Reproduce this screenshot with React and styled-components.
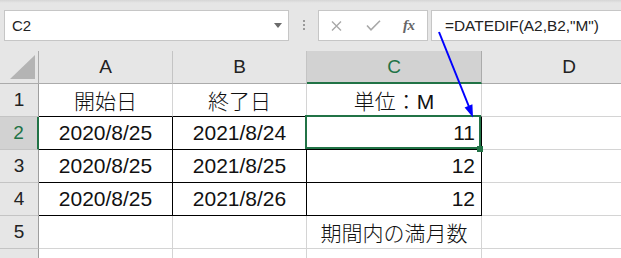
import React from 'react';
import styled, { createGlobalStyle } from 'styled-components';

const GREEN = '#217346';

const Global = createGlobalStyle`
  html, body { margin: 0; padding: 0; background: #fff; overflow: hidden; }
  body { font-family: "Liberation Sans", "Noto Sans CJK JP", sans-serif; }
`;

const Frame = styled.div`
  position: relative;
  width: 621px;
  height: 258px;
  overflow: hidden;
  background: #e6e6e6;
`;

const Toolbar = styled.div`
  display: flex;
  align-items: flex-start;
  height: 51px;
  box-sizing: border-box;
  padding: 10px 0 0 4px;
  background: linear-gradient(#d6d6d6 0, #e6e6e6 3px);
  white-space: nowrap;
`;

const NameBox = styled.div`
  flex: none;
  width: 285px;
  height: 31px;
  box-sizing: border-box;
  border: 1px solid #c6c6c6;
  background: #fff;
  display: flex;
  align-items: center;
  justify-content: space-between;
  padding: 0 6px 0 7px;
  font-size: 15px;
  color: #222;
`;

const Caret = styled.span`
  width: 0;
  height: 0;
  border-left: 4px solid transparent;
  border-right: 4px solid transparent;
  border-top: 5px solid #6b6b6b;
`;

const Dots = styled.div`
  flex: none;
  display: flex;
  flex-direction: column;
  gap: 2px;
  margin: 10px 0 0 14px;
`;

const Dot = styled.span`
  width: 2px;
  height: 2px;
  background: #9a9a9a;
`;

const ButtonBox = styled.div`
  flex: none;
  width: 110px;
  height: 31px;
  box-sizing: border-box;
  margin-left: 13px;
  border: 1px solid #c6c6c6;
  background: #fff;
  display: flex;
  align-items: center;
  padding-left: 12px;
`;

const IconSlot = styled.span`
  display: flex;
  margin-left: ${p => p.$gap || 0}px;
`;

const Fx = styled.span`
  margin-left: ${p => p.$gap || 0}px;
  font-family: "Liberation Serif", serif;
  font-style: italic;
  font-weight: bold;
  font-size: 15px;
  color: #666;
  letter-spacing: -0.5px;
`;

const FormulaBox = styled.div`
  flex: none;
  width: 300px;
  height: 31px;
  box-sizing: border-box;
  margin-left: 3px;
  border: 1px solid #c6c6c6;
  border-right: none;
  background: #fff;
  display: flex;
  align-items: center;
  padding-left: 13px;
  font-size: 15.4px;
  color: #222;
`;

const Sheet = styled.div`
  display: grid;
  grid-template-columns: 39px 134px 134px 175px 175px;
  grid-auto-rows: 33px;
  background: #fff;
`;

const Cell = styled.div`
  position: relative;
  box-sizing: border-box;
  display: flex;
  align-items: center;
  justify-content: ${p => (p.$align === 'right' ? 'flex-end' : 'center')};
  padding: ${p => (p.$align === 'right' ? '0 6px 0 0' : '0')};
  font-size: 21px;
  font-weight: 300;
  color: #111;
  background: #fff;
  border-right: 1px solid ${p => (p.$boxRight ? '#000' : '#d4d4d4')};
  border-bottom: 1px solid ${p => (p.$boxBottom ? '#000' : '#d4d4d4')};
  white-space: nowrap;
`;

const ColHead = styled.div`
  box-sizing: border-box;
  display: flex;
  align-items: center;
  justify-content: center;
  font-size: 19px;
  color: ${p => (p.$selected ? GREEN : '#222')};
  background: ${p => (p.$selected ? '#d2d2d2' : '#e6e6e6')};
  border-right: 1px solid ${p => (p.$selected ? '#ababab' : '#c4c4c4')};
  border-bottom: ${p => (p.$selected ? `2px solid ${GREEN}` : '1px solid #ababab')};
`;

const RowHead = styled.div`
  box-sizing: border-box;
  display: flex;
  align-items: center;
  justify-content: center;
  font-size: 19px;
  color: ${p => (p.$selected ? GREEN : '#222')};
  background: ${p => (p.$selected ? '#d2d2d2' : '#e6e6e6')};
  border-right: ${p => (p.$selected ? `2px solid ${GREEN}` : '1px solid #9e9e9e')};
  border-bottom: 1px solid #c4c4c4;
`;

const Corner = styled.div`
  box-sizing: border-box;
  display: flex;
  align-items: flex-end;
  justify-content: flex-end;
  padding: 0 3px 4px 0;
  background: #e6e6e6;
  border-right: 1px solid #ababab;
  border-bottom: 1px solid #ababab;
`;

const CornerTriangle = styled.span`
  width: 25px;
  height: 24px;
  background: #b4b4b4;
  clip-path: polygon(100% 0, 100% 100%, 0 100%);
`;

const Selection = styled.div`
  position: absolute;
  inset: -2px 0 0 -2px;
  border: 2px solid ${GREEN};
  z-index: 2;
  pointer-events: none;
`;

const FillHandle = styled.div`
  position: absolute;
  right: -2px;
  bottom: -3px;
  width: 6px;
  height: 6px;
  background: ${GREEN};
  z-index: 3;
`;

const ArrowLayer = styled.svg`
  position: absolute;
  left: 0;
  top: 0;
  width: 621px;
  height: 258px;
  pointer-events: none;
  z-index: 5;
`;

const rows = [
  { n: 1, a: '開始日', b: '終了日', c: '単位：M', cAlign: 'center' },
  { n: 2, a: '2020/8/25', b: '2021/8/24', c: '11', cAlign: 'right', sel: true },
  { n: 3, a: '2020/8/25', b: '2021/8/25', c: '12', cAlign: 'right' },
  { n: 4, a: '2020/8/25', b: '2021/8/26', c: '12', cAlign: 'right' },
  { n: 5, a: '', b: '', c: '期間内の満月数', cAlign: 'center' },
  { n: 6, a: '', b: '', c: '', cAlign: 'center' },
];

export default function App() {
  return (
    <Frame>
      <Global />
      <Toolbar>
        <NameBox>
          <span>C2</span>
          <Caret />
        </NameBox>
        <Dots>
          <Dot />
          <Dot />
          <Dot />
        </Dots>
        <ButtonBox>
          <IconSlot>
            <svg width="11" height="10" viewBox="0 0 11 10">
              <path d="M1 0.5 L10 9.5 M10 0.5 L1 9.5" stroke="#a8a8a8" strokeWidth="1.4" fill="none" />
            </svg>
          </IconSlot>
          <IconSlot $gap={24}>
            <svg width="15" height="11" viewBox="0 0 15 11">
              <path d="M1 5.5 L5 9.8 L14 0.8" stroke="#a8a8a8" strokeWidth="1.6" fill="none" />
            </svg>
          </IconSlot>
          <Fx $gap={22}>fx</Fx>
        </ButtonBox>
        <FormulaBox>=DATEDIF(A2,B2,"M")</FormulaBox>
      </Toolbar>
      <Sheet>
        <Corner>
          <CornerTriangle />
        </Corner>
        <ColHead>A</ColHead>
        <ColHead>B</ColHead>
        <ColHead $selected>C</ColHead>
        <ColHead>D</ColHead>
        {rows.map(r => {
          const boxed = r.n >= 2 && r.n <= 4;
          const topOfBox = r.n === 1;
          return (
            <React.Fragment key={r.n}>
              <RowHead $selected={r.sel}>{r.n}</RowHead>
              <Cell $boxRight={boxed} $boxBottom={boxed || topOfBox}>{r.a}</Cell>
              <Cell $boxRight={boxed} $boxBottom={boxed || topOfBox}>{r.b}</Cell>
              <Cell $boxRight={boxed} $boxBottom={boxed || topOfBox} $align={r.cAlign}>
                {r.c}
                {r.sel && (
                  <>
                    <Selection />
                    <FillHandle />
                  </>
                )}
              </Cell>
              <Cell />
            </React.Fragment>
          );
        })}
      </Sheet>
      <ArrowLayer viewBox="0 0 621 258">
        <line x1="439" y1="32" x2="469.5" y2="108" stroke="#0000ff" strokeWidth="2" />
        <polygon points="473,117.5 464.6,107.4 472.4,104.3" fill="#0000ff" />
      </ArrowLayer>
    </Frame>
  );
}
